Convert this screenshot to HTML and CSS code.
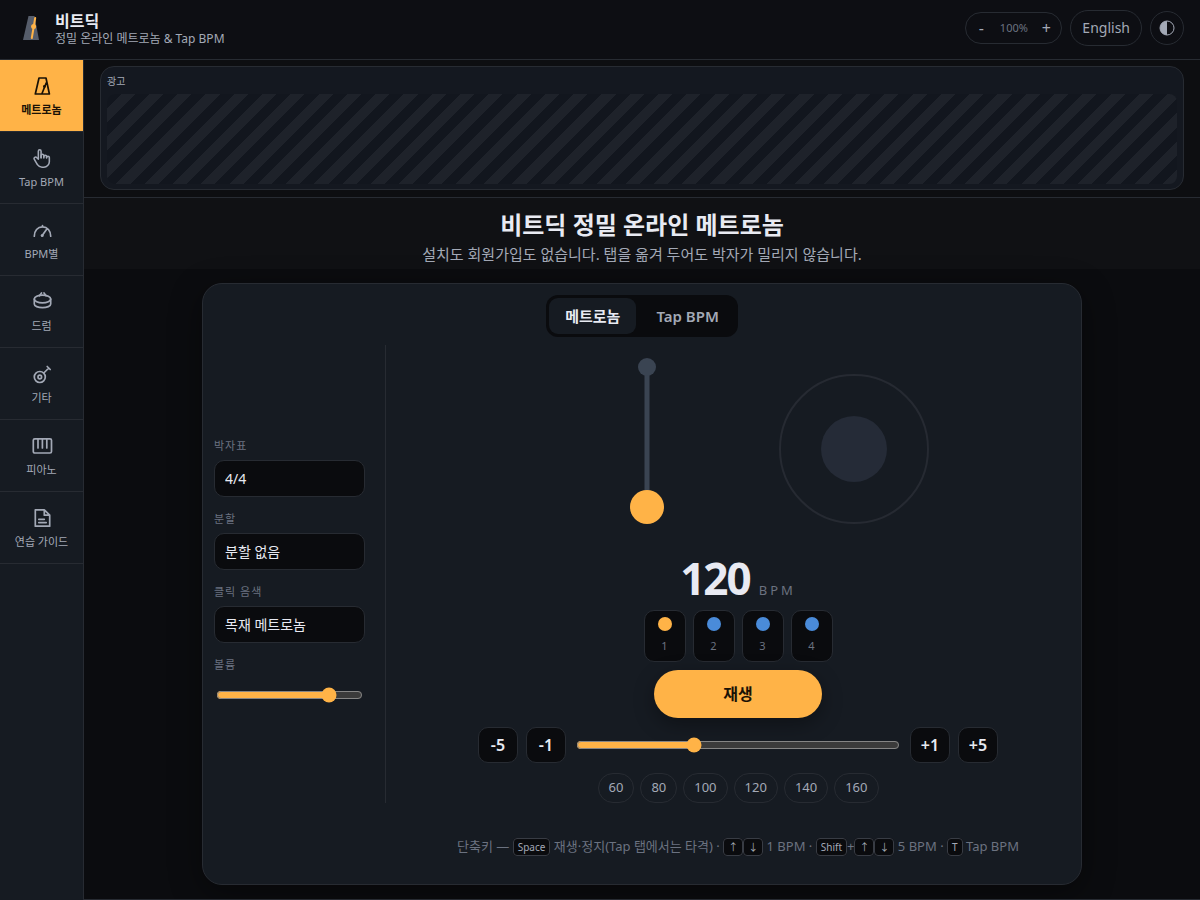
FILE: index.html
```html
<!DOCTYPE html>
<html lang="ko">

<head>
    <meta charset="UTF-8">
    <meta name="viewport" content="width=device-width, initial-scale=1">
    <title>비트딕</title>
    <link rel="stylesheet" href="styles.css">
</head>

<body>

    <header class="topbar">
        <a class="brand" href="#">
            <svg class="brand-logo" viewBox="0 0 23 28" aria-hidden="true">
                <path d="M8.5 2h6L19 26H3z" fill="#565d6b" />
                <path d="M11.8 24L15.2 4" stroke="#ffb347" stroke-width="2" stroke-linecap="round" />
                <circle cx="13.6" cy="12.5" r="2.5" fill="#ffb347" />
            </svg>
            <span class="brand-text">
                <strong class="brand-name">비트딕</strong>
                <span class="brand-tagline">정밀 온라인 메트로놈 &amp; Tap BPM</span>
            </span>
        </a>
        <div class="topbar-actions">
            <div class="zoom-control">
                <button class="zoom-btn" type="button">-</button>
                <span class="zoom-value">100%</span>
                <button class="zoom-btn" type="button">+</button>
            </div>
            <a class="lang-link" href="#">English</a>
            <button class="theme-btn" type="button" aria-label="테마">
                <svg viewBox="0 0 16 16" width="16" height="16" aria-hidden="true">
                    <circle cx="8" cy="8" r="7" fill="none" stroke="currentColor" />
                    <path d="M8 1a7 7 0 0 0 0 14z" fill="currentColor" />
                </svg>
            </button>
        </div>
    </header>

    <div class="layout">
        <nav class="sidebar">
            <a class="nav-item active" href="#">
                <svg class="nav-icon" viewBox="0 0 22 22" aria-hidden="true">
                    <path d="M8 3h7l3.4 16H4.3zM11 18.5L15.2 8" />
                    <circle class="dot" cx="13.4" cy="11.5" r="1.4" />
                </svg>
                <span>메트로놈</span>
            </a>
            <a class="nav-item" href="#">
                <svg class="nav-icon" viewBox="0 0 24 24" aria-hidden="true">
                    <path d="M8 13V4.5a1.5 1.5 0 0 1 3 0V12" />
                    <path d="M11 11.5v-2a1.5 1.5 0 1 1 3 0V12" />
                    <path d="M14 10.5a1.5 1.5 0 0 1 3 0V12" />
                    <path d="M17 11.5a1.5 1.5 0 0 1 3 0V16a6 6 0 0 1-6 6h-2a6 6 0 0 1-5-2.7c-.4-.6-1.5-2.5-3.5-6a1.5 1.5 0 0 1 .54-2.02 1.87 1.87 0 0 1 2.28.28L8 13" />
                </svg>
                <span>Tap BPM</span>
            </a>
            <a class="nav-item" href="#">
                <svg class="nav-icon" viewBox="0 0 22 22" aria-hidden="true">
                    <path d="M3.3 17.2C3.3 11.8 6.6 7.9 11.5 7.9s8.2 3.9 8.2 9.3M11.5 6.5V8M11.2 16.5l4.3-6" />
                    <circle class="dot" cx="11.2" cy="16.5" r="1.5" />
                </svg>
                <span>BPM별</span>
            </a>
            <a class="nav-item" href="#">
                <svg class="nav-icon" viewBox="0 0 22 22" aria-hidden="true">
                    <ellipse cx="11.5" cy="8" rx="8.2" ry="3.8" />
                    <path d="M3.3 8v5c0 2.1 3.7 3.7 8.2 3.7s8.2-1.6 8.2-3.7V8M10.5 2l-2 2.8M13 2l2 2.8" />
                </svg>
                <span>드럼</span>
            </a>
            <a class="nav-item" href="#">
                <svg class="nav-icon" viewBox="0 0 22 22" aria-hidden="true">
                    <circle cx="8.8" cy="14" r="5.5" />
                    <circle cx="8.8" cy="14" r="1.8" />
                    <path d="M12.8 10l5-5M16.2 3.5l3 3" />
                </svg>
                <span>기타</span>
            </a>
            <a class="nav-item" href="#">
                <svg class="nav-icon" viewBox="0 0 22 22" aria-hidden="true">
                    <rect x="2.3" y="3.8" width="18.2" height="14.2" rx="1.5" />
                    <path d="M7 4v9M11.4 4v9M15.8 4v9" />
                </svg>
                <span>피아노</span>
            </a>
            <a class="nav-item" href="#">
                <svg class="nav-icon" viewBox="0 0 22 22" aria-hidden="true">
                    <path d="M4.3 2.8h9l5.4 5.4v11H4.3zM13.3 3v5.2h5M7.8 12.3h5.5M7.8 15.6h7.4" />
                </svg>
                <span>연습 가이드</span>
            </a>
        </nav>

        <main class="main">
            <div class="ad-zone">
                <div class="ad-box">
                    <span class="ad-label">광고</span>
                    <div class="ad-stripes"></div>
                </div>
            </div>

            <div class="hero">
                <h1>비트딕 정밀 온라인 메트로놈</h1>
                <p>설치도 회원가입도 없습니다. 탭을 옮겨 두어도 박자가 밀리지 않습니다.</p>
            </div>

            <div class="workspace">
                <section class="card">
                    <div class="tabs">
                        <button class="tab-button active" type="button">메트로놈</button>
                        <button class="tab-button" type="button">Tap BPM</button>
                    </div>

                    <div class="card-body">
                        <div class="settings">
                            <div class="field">
                                <label for="meter">박자표</label>
                                <select id="meter">
                                    <option>4/4</option>
                                </select>
                            </div>
                            <div class="field">
                                <label for="division">분할</label>
                                <select id="division">
                                    <option>분할 없음</option>
                                </select>
                            </div>
                            <div class="field">
                                <label for="sound">클릭 음색</label>
                                <select id="sound">
                                    <option>목재 메트로놈</option>
                                </select>
                            </div>
                            <div class="field">
                                <label for="volume">볼륨</label>
                                <input id="volume" type="range" min="0" max="100" value="80">
                            </div>
                        </div>

                        <div class="player">
                            <div class="stage">
                                <svg class="pendulum" viewBox="0 0 200 190" aria-hidden="true">
                                    <path d="M100 13v140" stroke="#3a4452" stroke-width="5" />
                                    <circle cx="100" cy="13" r="9" fill="#3a4452" />
                                    <circle cx="100" cy="153" r="17" fill="#ffb347" />
                                </svg>
                                <div class="pulse">
                                    <div class="pulse-core"></div>
                                </div>
                            </div>

                            <div class="tempo">
                                <span class="tempo-value">120</span>
                                <span class="tempo-unit">BPM</span>
                            </div>

                            <div class="beats">
                                <button class="beat accent" type="button"><i></i>1</button>
                                <button class="beat" type="button"><i></i>2</button>
                                <button class="beat" type="button"><i></i>3</button>
                                <button class="beat" type="button"><i></i>4</button>
                            </div>

                            <button class="play-btn" type="button">재생</button>

                            <div class="tempo-row">
                                <button class="step-btn" type="button">-5</button>
                                <button class="step-btn" type="button">-1</button>
                                <input type="range" min="20" max="300" value="120" aria-label="BPM">
                                <button class="step-btn" type="button">+1</button>
                                <button class="step-btn" type="button">+5</button>
                            </div>

                            <div class="presets">
                                <button class="preset" type="button">60</button>
                                <button class="preset" type="button">80</button>
                                <button class="preset" type="button">100</button>
                                <button class="preset" type="button">120</button>
                                <button class="preset" type="button">140</button>
                                <button class="preset" type="button">160</button>
                            </div>
                        </div>

                        <p class="shortcuts">단축키 — <kbd>Space</kbd> 재생·정지(Tap 탭에서는 타격) · <kbd>↑</kbd><kbd>↓</kbd> 1 BPM · <kbd>Shift</kbd>+<kbd>↑</kbd><kbd>↓</kbd> 5 BPM · <kbd>T</kbd> Tap BPM</p>
                    </div>
                </section>
            </div>

            <div class="page-end"></div>
        </main>
    </div>

</body>

</html>
```

FILE: styles.css
```css
:root {
    color-scheme: dark;
    --bg: #0b0c0f;
    --panel: #161b22;
    --well: #0a0b0e;
    --line: #272b32;
    --text: #e8eaf2;
    --muted: #a3a9b6;
    --dim: #6b7280;
    --accent: #ffb347;
}

* {
    box-sizing: border-box;
}

body {
    margin: 0;
    min-height: 100vh;
    display: flex;
    flex-direction: column;
    background: var(--bg);
    color: var(--text);
    font-family: "Noto Sans", "Noto Sans CJK KR", sans-serif;
}

button,
select,
input {
    font-family: inherit;
    color: inherit;
}

button {
    padding: 0;
    cursor: pointer;
}

a {
    color: inherit;
    text-decoration: none;
}

/* header */
.topbar {
    display: flex;
    justify-content: space-between;
    align-items: center;
    height: 60px;
    padding: 0 16px 4px 20px;
    background: #0d0e13;
    border-bottom: 1px solid var(--line);
}

.brand {
    display: flex;
    align-items: center;
    gap: 12px;
}

.brand-logo {
    width: 23px;
    height: 28px;
    fill: none;
}

.brand-text {
    display: flex;
    flex-direction: column;
    padding-top: 2px;
}

.brand-name {
    font-size: 16px;
    line-height: 20px;
}

.brand-tagline {
    font-size: 12px;
    line-height: 16px;
    color: var(--muted);
}

.topbar-actions {
    display: flex;
    align-items: center;
    gap: 8px;
    color: var(--muted);
}

.zoom-control {
    display: flex;
    align-items: center;
    height: 32px;
    border: 1px solid var(--line);
    border-radius: 16px;
}

.zoom-btn {
    width: 30px;
    border: none;
    background: none;
    font-size: 16px;
}

.zoom-value {
    width: 35px;
    font-size: 11px;
    text-align: center;
    color: var(--dim);
}

.lang-link {
    padding: 0 11px;
    border: 1px solid var(--line);
    border-radius: 18px;
    font-size: 14px;
    line-height: 34px;
}

.theme-btn {
    display: grid;
    place-items: center;
    width: 34px;
    height: 34px;
    border: 1px solid var(--line);
    border-radius: 50%;
    background: none;
}

/* layout */
.layout {
    flex: 1;
    display: flex;
}

.sidebar {
    width: 84px;
    background: var(--panel);
    border-right: 1px solid var(--line);
}

.nav-item {
    display: flex;
    flex-direction: column;
    align-items: center;
    justify-content: center;
    gap: 5px;
    height: 72px;
    padding-top: 1px;
    border-bottom: 1px solid var(--line);
    font-size: 11px;
    line-height: 16px;
    color: var(--muted);
}

.nav-item.active {
    background: var(--accent);
    color: #1a1206;
    font-weight: 700;
}

.nav-icon {
    width: 22px;
    height: 22px;
    fill: none;
    stroke: currentColor;
    stroke-width: 1.7;
    stroke-linecap: round;
    stroke-linejoin: round;
}

.nav-icon .dot {
    fill: currentColor;
    stroke: none;
}

.main {
    flex: 1;
    min-width: 0;
    display: flex;
    flex-direction: column;
}

/* ad */
.ad-zone {
    padding: 6px 16px 7px;
    background: #0d0e11;
    border-bottom: 1px solid var(--line);
}

.ad-box {
    padding: 6px 6px 5px;
    background: #141820;
    border: 1px solid var(--line);
    border-radius: 14px;
}

.ad-label {
    display: block;
    margin-bottom: 5px;
    font-size: 10px;
    line-height: 16px;
    color: var(--muted);
}

.ad-stripes {
    height: 90px;
    border-radius: 8px;
    background: repeating-linear-gradient(135deg, #12161e 0 10px, #1e222a 10px 20px);
}

/* hero */
.hero {
    padding: 10px 16px 3px;
    background: #101114;
    text-align: center;
}

.hero h1 {
    margin: 0;
    font-size: 24px;
    line-height: 34px;
}

.hero p {
    margin: 0;
    font-size: 15px;
    line-height: 24px;
    color: var(--muted);
}

/* card */
.workspace {
    flex: 1;
    padding: 14px 16px;
}

.card {
    max-width: 880px;
    margin: 0 auto;
    padding: 11px;
    background: var(--panel);
    border: 1px solid var(--line);
    border-radius: 20px;
    box-shadow: 0 8px 32px rgba(0, 0, 0, 0.4);
}

.tabs {
    display: flex;
    gap: 4px;
    width: fit-content;
    margin: 0 auto 8px;
    padding: 3px;
    background: var(--well);
    border-radius: 12px;
}

.tab-button {
    height: 36px;
    padding: 0 16px 1px;
    border: none;
    border-radius: 9px;
    background: none;
    color: var(--muted);
    font-size: 15px;
    font-weight: 600;
}

.tab-button.active {
    background: var(--panel);
    color: var(--text);
    font-weight: 700;
}

.card-body {
    display: grid;
    grid-template-columns: 172px 1fr;
    column-gap: 20px;
}

.settings {
    display: flex;
    flex-direction: column;
    justify-content: center;
    gap: 14px;
    padding-right: 20px;
    border-right: 1px solid var(--line);
}

.field {
    display: flex;
    flex-direction: column;
    gap: 6px;
}

.field label {
    font-size: 11px;
    line-height: 16px;
    letter-spacing: 1px;
    color: var(--dim);
}

.field select {
    appearance: none;
    width: 100%;
    height: 37px;
    padding: 0 10px;
    background: var(--well);
    border: 1px solid var(--line);
    border-radius: 10px;
    font-size: 14px;
}

input[type="range"] {
    accent-color: var(--accent);
    margin: 2px;
}

.field input {
    height: 28px;
}

.player {
    display: flex;
    flex-direction: column;
    align-items: center;
}

.stage {
    display: flex;
    align-items: center;
    gap: 32px;
    height: 208px;
}

.pendulum {
    width: 200px;
    height: 190px;
    fill: none;
}

.pulse {
    display: grid;
    place-items: center;
    width: 150px;
    height: 150px;
    border: 2px solid #262a32;
    border-radius: 50%;
}

.pulse-core {
    width: 66px;
    height: 66px;
    border-radius: 50%;
    background: #252b37;
}

.tempo {
    display: flex;
    align-items: baseline;
    gap: 9px;
    margin-bottom: 6px;
}

.tempo-value {
    font-size: 44px;
    font-weight: 700;
    line-height: 51px;
    letter-spacing: -2px;
}

.tempo-unit {
    font-size: 13px;
    letter-spacing: 3px;
    color: var(--dim);
}

.beats {
    display: flex;
    gap: 7px;
    margin-bottom: 8px;
}

.beat {
    display: flex;
    flex-direction: column;
    align-items: center;
    gap: 6px;
    width: 42px;
    height: 52px;
    padding-top: 6px;
    background: var(--well);
    border: 1px solid var(--line);
    border-radius: 10px;
    color: var(--dim);
    font-size: 11px;
    line-height: 18px;
}

.beat i {
    width: 14px;
    height: 14px;
    border-radius: 50%;
    background: #4a8bd9;
}

.beat.accent i {
    background: var(--accent);
}

.play-btn {
    width: 168px;
    height: 48px;
    padding-bottom: 2px;
    border: none;
    border-radius: 24px;
    background: var(--accent);
    box-shadow: 0 6px 20px rgba(0, 0, 0, 0.35);
    color: #1a1206;
    font-size: 16px;
    font-weight: 700;
}

.tempo-row {
    display: flex;
    align-items: center;
    gap: 8px;
    width: 100%;
    max-width: 520px;
    margin: 9px 0 10px;
}

.tempo-row input {
    flex: 1;
    min-width: 0;
}

.step-btn {
    width: 40px;
    height: 36px;
    background: var(--well);
    border: 1px solid var(--line);
    border-radius: 10px;
    font-size: 16px;
    font-weight: 600;
}

.presets {
    display: flex;
    gap: 6px;
}

.preset {
    height: 30px;
    padding: 0 10px 2px;
    background: none;
    border: 1px solid var(--line);
    border-radius: 15px;
    color: var(--muted);
    font-size: 13px;
}

.shortcuts {
    grid-column: 2;
    margin: 31px 0 14px;
    font-size: 13px;
    line-height: 24px;
    text-align: center;
    color: var(--dim);
}

.shortcuts kbd {
    padding: 1px 4px;
    background: var(--well);
    border: 1px solid #383c44;
    border-radius: 4px;
    color: var(--muted);
    font-family: inherit;
    font-size: 10px;
}

.page-end {
    border-top: 1px solid var(--line);
}
```
